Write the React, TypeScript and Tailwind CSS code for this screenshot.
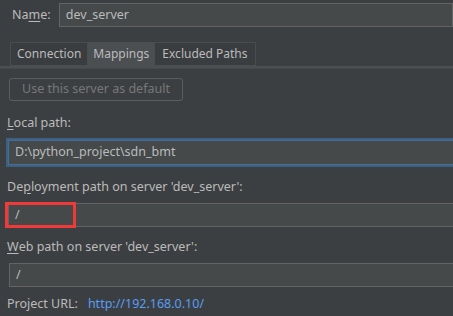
import React from 'react';

const font = "font-['Noto_Sans','Open_Sans',sans-serif]";

const Field: React.FC<{ value: string; focused?: boolean; className?: string }> = ({ value, focused, className = '' }) => (
  <div
    className={`h-[24px] flex items-center pl-[6px] bg-[#45494a] text-[#bbbbbb] text-[12.5px] border ${
      focused ? 'border-[#466d94] outline-2 outline-[#3d6185]' : 'border-[#646464]'
    } ${className}`}
  >
    {value}
  </div>
);

const App: React.FC = () => {
  return (
    <div className={`w-[453px] h-[316px] overflow-hidden bg-[#3c3f41] text-[#bbbbbb] text-[12.5px] leading-none ${font}`}>
      {/* Name */}
      <div className="flex items-center pt-[3px] pl-[12px]">
        <span className="w-[50px]">
          Na<span className="underline underline-offset-2">m</span>e:
        </span>
        <Field value="dev_server" className="w-[420px] h-[23px]" />
      </div>

      {/* Tabs */}
      <div className="mt-[15px] text-[12px]">
        <div className="flex pl-[10px]">
          <div className="h-[24px] px-[6px] flex items-center border border-[#4a4d4f] bg-[#3a3d3f]">Connection</div>
          <div className="h-[24px] px-[5px] flex items-center bg-[#4b4f51]">Mappings</div>
          <div className="h-[24px] px-[7px] flex items-center border border-[#4a4d4f] bg-[#3a3d3f]">Excluded Paths</div>
        </div>
        <div className="h-[3px] bg-[#4b4f51] border-b border-[#45484a]" />
      </div>

      <div className="pl-[8px]">
        {/* Default button */}
        <div className="mt-[9px] ml-[1px] w-[174px] h-[23px] flex items-center justify-center rounded-[3px] border border-[#5a5d5f] text-[#777777]">
          Use this server as default
        </div>

        <div className="mt-[15px] -ml-[1px] h-[14px] flex items-center">
          <span className="underline underline-offset-2">L</span>ocal path:
        </div>
        <Field value={'D:\\python_project\\sdn_bmt'} focused className="mt-[10px] w-[460px] h-[25px]" />

        <div className="mt-[15px] -ml-[1px] h-[14px] flex items-center">
          De<span className="underline underline-offset-2">p</span>loyment path on server 'dev_server':
        </div>
        <div className="relative mt-[9px]">
          <Field value="/" className="w-[460px]" />
          <div className="absolute left-[-3px] top-[-1px] w-[71px] h-[26px] border-[3px] border-[#f03a3a]" />
        </div>

        <div className="mt-[13px] -ml-[1px] h-[14px] flex items-center">
          <span className="underline underline-offset-2">W</span>eb path on server 'dev_server':
        </div>
        <Field value="/" className="mt-[9px] ml-[1px] w-[460px]" />

        <div className="mt-[10px] -ml-[1px] h-[14px] flex items-center">
          <span>Project URL:</span>
          <span className="ml-[10px] text-[#589df6]">http://192.168.0.10/</span>
        </div>
      </div>
    </div>
  );
};

export default App;
